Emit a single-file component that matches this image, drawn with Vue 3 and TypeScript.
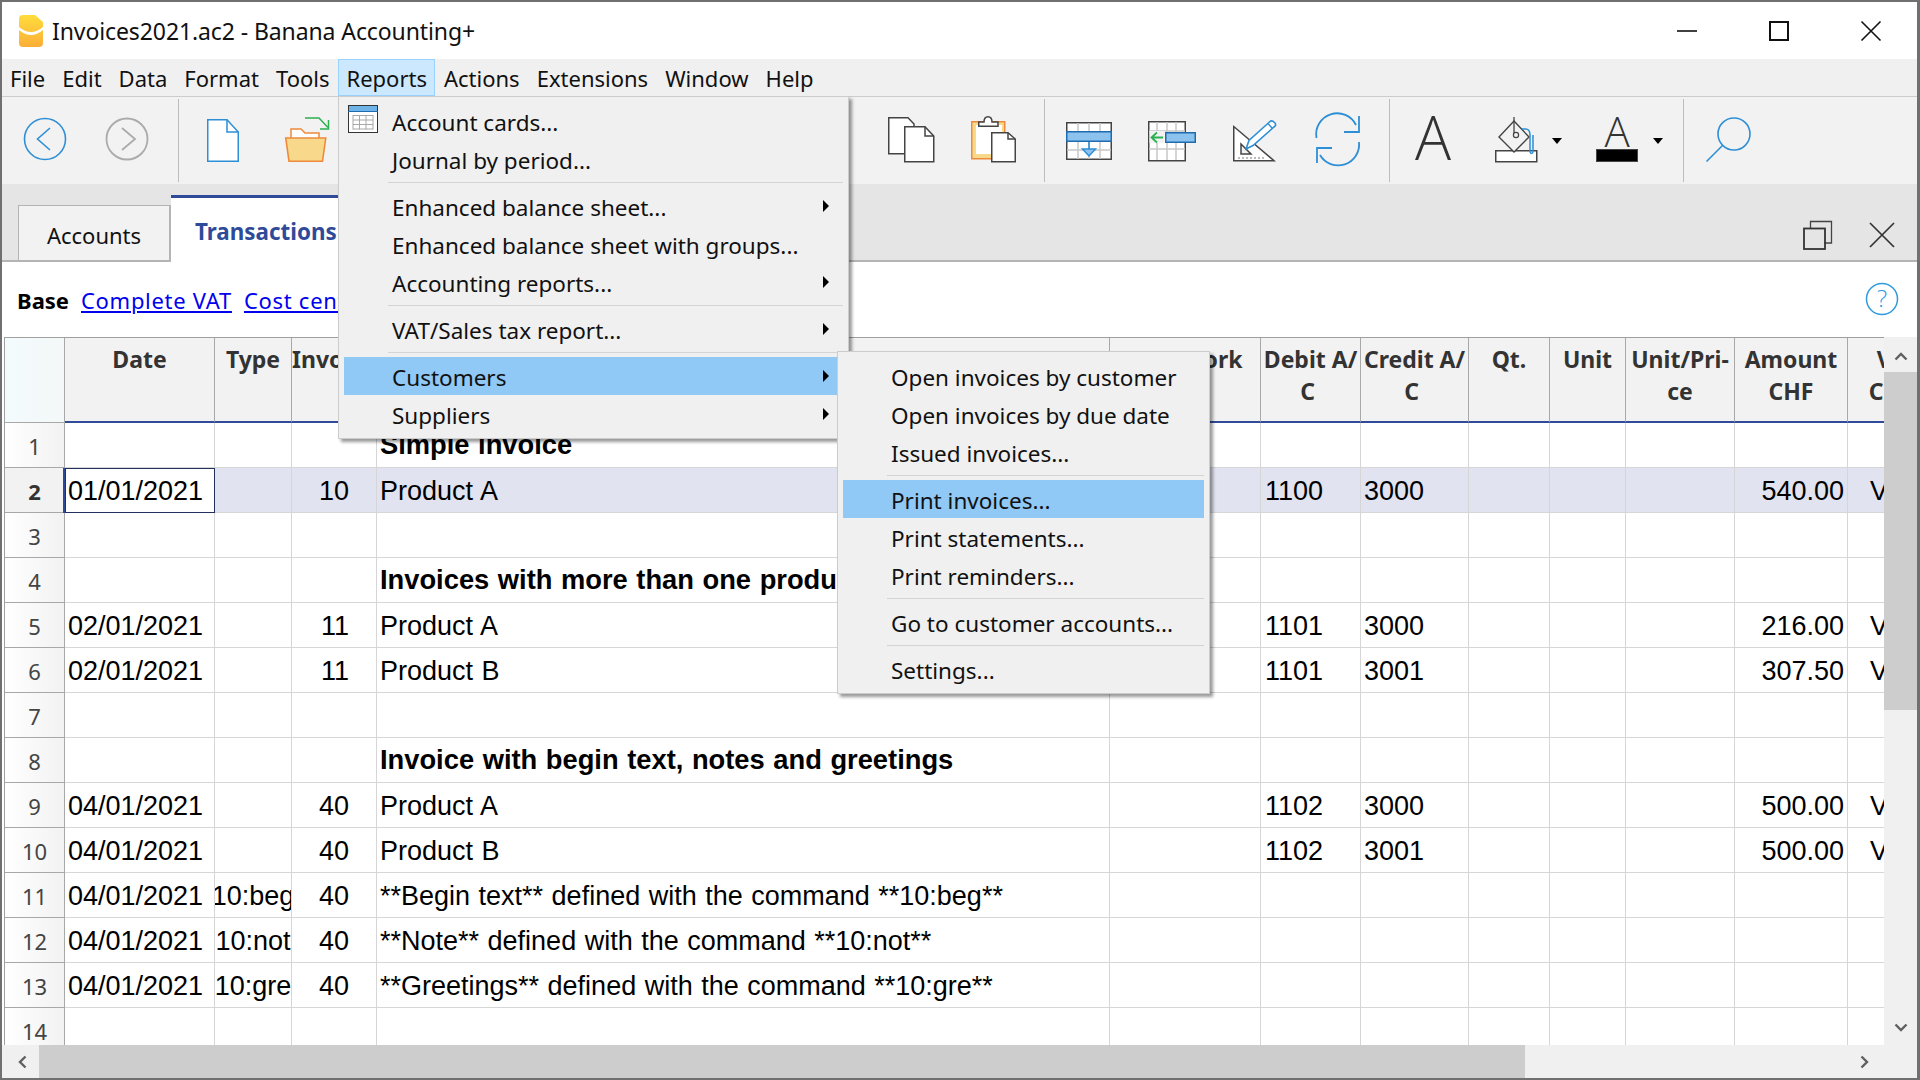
<template>
  <div class="window">
    <header class="titlebar">
      <svg class="logo" width="24" height="32" viewBox="0 0 24 32">
        <defs>
          <linearGradient id="logoFill" x1="0" y1="0" x2="0" y2="1">
            <stop offset="0" stop-color="#ffdc3c" />
            <stop offset="1" stop-color="#fbae38" />
          </linearGradient>
        </defs>
        <path d="M4 0H16L24 7V28a4 4 0 0 1-4 4H4a4 4 0 0 1-4-4V4a4 4 0 0 1 4-4Z" fill="url(#logoFill)" />
        <path d="M0 12Q12 22 24 12V15Q12 25 0 15Z" fill="#fff" />
      </svg>
      <span class="title-text">Invoices2021.ac2 - Banana Accounting+</span>
      <div class="win-controls">
        <svg width="20" height="20" viewBox="0 0 20 20"><path d="M0 10H20" stroke="#111" stroke-width="1.6" /></svg>
        <svg width="20" height="20" viewBox="0 0 20 20"><rect x="1" y="1" width="18" height="18" fill="none" stroke="#111" stroke-width="2" /></svg>
        <svg width="20" height="20" viewBox="0 0 20 20"><path d="M0.5 0.5L19.5 19.5M19.5 0.5L0.5 19.5" stroke="#111" stroke-width="1.6" /></svg>
      </div>
    </header>

    <nav class="menubar">
      <span v-for="m in menus" :key="m" class="menubar-item" :class="{ open: m === 'Reports' }">{{ m }}</span>
    </nav>

    <div class="toolbar">
      <svg class="tb first" width="48" height="48" viewBox="0 0 48 48">
        <circle cx="24" cy="23" r="20.5" fill="none" stroke="#2e8fd6" stroke-width="1.6" />
        <path d="M29 12L16.5 23L29 34" fill="none" stroke="#2e8fd6" stroke-width="1.6" />
      </svg>
      <svg class="tb" width="48" height="48" viewBox="0 0 48 48">
        <circle cx="24" cy="23" r="20.5" fill="none" stroke="#ababab" stroke-width="1.8" />
        <path d="M19 12L32 23L19 34" fill="none" stroke="#ababab" stroke-width="1.8" />
      </svg>
      <i class="tb-sep"></i>
      <svg class="tb after-sep" width="48" height="48" viewBox="0 0 48 48">
        <path d="M8.75 3.75H28L39.25 16V45.25H8.75Z" fill="#fff" stroke="#2e8fd6" stroke-width="1.5" />
        <path d="M28 3.75V16H39.25" fill="none" stroke="#2e8fd6" stroke-width="1.5" />
      </svg>
      <svg class="tb" width="48" height="48" viewBox="0 0 48 48">
        <path d="M10 22V13H20L24 17H38V22" fill="#fff" stroke="#ed8a3c" stroke-width="1.5" />
        <path d="M4.75 22H44.75L41.5 45.25H8Z" fill="#f8d88a" stroke="#ed8a3c" stroke-width="1.6" />
        <path d="M24 2H38L47 11.5" fill="none" stroke="#2cb050" stroke-width="1.5" />
        <path d="M47.5 4V13H39" fill="none" stroke="#2cb050" stroke-width="1.5" />
      </svg>
      <i class="tb-hidden"></i>
      <svg class="tb" width="48" height="48" viewBox="0 0 48 48">
        <path d="M1.75 1.75H21L27 8V37.75H1.75Z" fill="#fff" stroke="#444" stroke-width="1.5" />
        <path d="M17.75 10.75H38L46.75 20V45.75H17.75Z" fill="#fff" stroke="#444" stroke-width="1.5" />
        <path d="M38 10.75V20H46.75" fill="none" stroke="#444" stroke-width="1.5" />
      </svg>
      <svg class="tb" width="48" height="48" viewBox="0 0 48 48">
        <rect x="2.75" y="5.75" width="33" height="37" fill="#f8d88a" stroke="#ed8a3c" stroke-width="1.5" />
        <rect x="7" y="9" width="26" height="29" fill="#fff" />
        <path d="M9.75 6H15Q15 .75 19 .75T23 6H29V10.25H9.75Z" fill="#fff" stroke="#444" stroke-width="1.5" />
        <path d="M22.75 16.75H39L46.25 23V45.75H22.75Z" fill="#fff" stroke="#444" stroke-width="1.5" />
        <path d="M39 16.75V23H46.25" fill="none" stroke="#444" stroke-width="1.5" />
      </svg>
      <i class="tb-sep"></i>
      <svg class="tb after-sep" width="48" height="48" viewBox="0 0 48 48">
        <rect x="1.75" y="6.75" width="44.5" height="36.5" fill="#fff" stroke="#444" stroke-width="1.5" />
        <path d="M13 7V43M24 7V43M35 7V43M2 34H46" stroke="#c8c8c8" stroke-width="1.5" />
        <rect x="1.75" y="15.75" width="44.5" height="9.5" fill="#8cc3ee" stroke="#1e6bb0" stroke-width="1.5" />
        <path d="M24 26V35" stroke="#2e8fd6" stroke-width="1.6" />
        <path d="M17.5 33H30.5L24 40Z" fill="#8cc3ee" stroke="#2e8fd6" stroke-width="1.5" />
      </svg>
      <svg class="tb" width="48" height="48" viewBox="0 0 48 48">
        <rect x="1.75" y="5.75" width="36.5" height="39" fill="#fff" stroke="#444" stroke-width="1.5" />
        <path d="M10 6V44M20 6V44M29 6V44M2 15H38M2 33H38" stroke="#c8c8c8" stroke-width="1.5" />
        <rect x="2.5" y="15" width="15" height="12" fill="#f2f2f2" />
        <rect x="18.75" y="16.75" width="29.5" height="9.5" fill="#8cc3ee" stroke="#1e6bb0" stroke-width="1.5" />
        <path d="M16 21.5H5M10 16.5L4.5 21.5L10 26.5" fill="none" stroke="#2cb050" stroke-width="1.8" />
      </svg>
      <svg class="tb e1" width="48" height="48" viewBox="0 0 48 48">
        <path d="M3.75 10.5V44.75H44Z" fill="#fff" stroke="#444" stroke-width="1.5" />
        <path d="M11 28V38H21Z" fill="#f2f2f2" stroke="#444" stroke-width="1.5" />
        <path d="M9 41V43M13 41V43M17 41V43M21 41V43M25 41V43M29 41V43M33 41V43" stroke="#777" stroke-width="1" />
        <path d="M16 33L19 24.5L40 5.5Q42 4 44.5 6.5T44 11L23 29.5Z" fill="#fff" stroke="#2e8fd6" stroke-width="1.6" />
        <path d="M38 7.5L42.5 12.5" stroke="#2e8fd6" stroke-width="1.4" />
      </svg>
      <svg class="tb e2" width="48" height="48" viewBox="0 0 48 48">
        <g fill="none" stroke="#2e8fd6" stroke-width="1.8">
          <path d="M2.5 22A21 21 0 0 1 42 9" />
          <path d="M45 0V16H30" />
          <path d="M45 26A21 21 0 0 1 6 39" />
          <path d="M3 47V32H18" />
        </g>
      </svg>
      <i class="tb-sep"></i>
      <svg class="tb after-sep" width="48" height="48" viewBox="0 0 48 48">
        <text x="23" y="44" text-anchor="middle" class="font-a big">A</text>
      </svg>
      <svg class="tb" width="48" height="48" viewBox="0 0 48 48">
        <rect x="3.75" y="34.75" width="41" height="11" fill="#fff" stroke="#444" stroke-width="1.5" />
        <path d="M22 5L37 21L22 36L7 21Z" fill="#f2f2f2" stroke="#444" stroke-width="1.4" />
        <path d="M22 1V18" stroke="#444" stroke-width="1.3" />
        <circle cx="24" cy="19" r="2.6" fill="#f2f2f2" stroke="#444" stroke-width="1.2" />
        <path d="M30 13H33.5Q38 13 38 19V36Q39.5 39 41 36V19" fill="none" stroke="#2e8fd6" stroke-width="1.5" />
      </svg>
      <i class="caret"></i>
      <svg class="tb after-caret" width="48" height="48" viewBox="0 0 48 48">
        <text x="24" y="31" text-anchor="middle" class="font-a small">A</text>
        <rect x="3.5" y="33.5" width="41" height="12" fill="#000" stroke="#444" />
      </svg>
      <i class="caret"></i>
      <i class="tb-sep short"></i>
      <svg class="tb after-sep" width="48" height="48" viewBox="0 0 48 48">
        <circle cx="30" cy="18" r="16" fill="none" stroke="#2e8fd6" stroke-width="1.6" />
        <path d="M18.5 29.5L2.5 45.5" stroke="#2e8fd6" stroke-width="1.6" />
      </svg>
    </div>

    <div class="tabbar">
      <div class="tab">Accounts</div>
      <div class="tab active">Transactions</div>
      <div class="tab-tools">
        <svg width="30" height="30" viewBox="0 0 30 30">
          <path d="M7.5 8V1.5H28.5V23H21.5" fill="none" stroke="#444" stroke-width="1.3" />
          <rect x="1" y="8.5" width="21" height="20.5" fill="none" stroke="#333" stroke-width="1.8" />
        </svg>
        <svg width="26" height="26" viewBox="0 0 26 26">
          <path d="M1 1L25 25M25 1L1 25" stroke="#333" stroke-width="1.7" />
        </svg>
      </div>
    </div>

    <div class="linkbar">
      <b>Base</b>
      <a>Complete VAT</a>
      <a>Cost centers</a>
      <svg class="help" width="34" height="34" viewBox="0 0 34 34">
        <circle cx="17" cy="17" r="15.5" fill="none" stroke="#2e9bdc" stroke-width="1.5" />
        <text x="17" y="25" text-anchor="middle" class="help-q">?</text>
      </svg>
    </div>

    <div class="table-area">
      <div class="grid">
        <div class="cols head-row">
          <div class="corner"></div>
          <div v-for="h in headers" :key="h.label" class="hcell" :class="h.cls">{{ h.label }}</div>
        </div>
        <div v-for="r in rows" :key="r.n" class="cols row" :class="{ current: r.n === 2 }">
          <div class="rownum">{{ r.n }}</div>
          <div class="cell" :class="{ selected: r.n === 2 }">{{ r.date }}</div>
          <div class="cell center"><span>{{ r.type }}</span></div>
          <div class="cell right wide-pad">{{ r.inv }}</div>
          <div class="cell" :class="{ strong: r.bold }">{{ r.desc }}</div>
          <div class="cell"></div>
          <div class="cell debit">{{ r.debit }}</div>
          <div class="cell">{{ r.credit }}</div>
          <div class="cell"></div>
          <div class="cell"></div>
          <div class="cell"></div>
          <div class="cell right">{{ r.amount }}</div>
          <div class="cell vat">{{ r.amount ? 'V81' : '' }}</div>
        </div>
      </div>
      <div class="vscroll">
        <svg class="chev" width="14" height="9" viewBox="0 0 14 9"><path d="M1.5 7.5L7 2L12.5 7.5" fill="none" stroke="#606060" stroke-width="2.4" /></svg>
        <div class="vthumb"></div>
        <svg class="chev down" width="14" height="9" viewBox="0 0 14 9"><path d="M1.5 1.5L7 7L12.5 1.5" fill="none" stroke="#606060" stroke-width="2.4" /></svg>
      </div>
    </div>

    <div class="hscroll">
      <svg class="hleft" width="9" height="14" viewBox="0 0 9 14"><path d="M7.5 1.5L2 7L7.5 12.5" fill="none" stroke="#606060" stroke-width="2.4" /></svg>
      <div class="hthumb"></div>
      <svg class="hright" width="9" height="14" viewBox="0 0 9 14"><path d="M1.5 1.5L7 7L1.5 12.5" fill="none" stroke="#606060" stroke-width="2.4" /></svg>
    </div>

    <div class="menu reports-menu">
      <template v-for="(it, i) in reportItems" :key="i">
        <div v-if="it.sep" class="menu-sep"></div>
        <div v-else class="menu-item" :class="{ hot: it.hot }">
          <svg v-if="i === 0" class="menu-icon" width="30" height="28" viewBox="0 0 30 28">
            <rect x="0.5" y="0.5" width="29" height="27" fill="#fff" stroke="#333" />
            <rect x="1" y="1" width="28" height="5" fill="#6db3e8" />
            <path d="M0 6.5H30" stroke="#1e6bb0" />
            <path d="M5 10.5H25M5 15H25M5 19.5H25M5 24H25M5 10V24.5M11.5 10V24.5M18 10V24.5M25 10V24.5" stroke="#a8a8a8" />
          </svg>
          <span>{{ it.label }}</span>
          <i v-if="it.sub" class="menu-arrow"></i>
        </div>
      </template>
    </div>

    <div class="menu customers-menu">
      <template v-for="(it, i) in customerItems" :key="i">
        <div v-if="it.sep" class="menu-sep"></div>
        <div v-else class="menu-item" :class="{ hot: it.hot }">
          <span>{{ it.label }}</span>
        </div>
      </template>
    </div>
  </div>
</template>

<script setup lang="ts">
interface MenuEntry {
  label?: string
  sep?: boolean
  sub?: boolean
  hot?: boolean
}

interface Row {
  n: number
  date?: string
  type?: string
  inv?: string
  desc?: string
  bold?: boolean
  debit?: string
  credit?: string
  amount?: string
}

const menus = ['File', 'Edit', 'Data', 'Format', 'Tools', 'Reports', 'Actions', 'Extensions', 'Window', 'Help']

const reportItems: MenuEntry[] = [
  { label: 'Account cards...' },
  { label: 'Journal by period...' },
  { sep: true },
  { label: 'Enhanced balance sheet...', sub: true },
  { label: 'Enhanced balance sheet with groups...' },
  { label: 'Accounting reports...', sub: true },
  { sep: true },
  { label: 'VAT/Sales tax report...', sub: true },
  { sep: true },
  { label: 'Customers', sub: true, hot: true },
  { label: 'Suppliers', sub: true }
]

const customerItems: MenuEntry[] = [
  { label: 'Open invoices by customer' },
  { label: 'Open invoices by due date' },
  { label: 'Issued invoices...' },
  { sep: true },
  { label: 'Print invoices...', hot: true },
  { label: 'Print statements...' },
  { label: 'Print reminders...' },
  { sep: true },
  { label: 'Go to customer accounts...' },
  { sep: true },
  { label: 'Settings...' }
]

const headers = [
  { label: 'Date' },
  { label: 'Type' },
  { label: 'Invoice', cls: 'left' },
  { label: 'Description' },
  { label: 'Network', cls: 'shift' },
  { label: 'Debit A/\nC\u00a0' },
  { label: 'Credit A/\nC\u00a0' },
  { label: 'Qt.' },
  { label: 'Unit' },
  { label: 'Unit/Pri-\nce' },
  { label: 'Amount\nCHF' },
  { label: 'VAT\nCode' }
]

const rows: Row[] = [
  { n: 1, desc: 'Simple invoice', bold: true },
  { n: 2, date: '01/01/2021', inv: '10', desc: 'Product A', debit: '1100', credit: '3000', amount: '540.00' },
  { n: 3 },
  { n: 4, desc: 'Invoices with more than one product', bold: true },
  { n: 5, date: '02/01/2021', inv: '11', desc: 'Product A', debit: '1101', credit: '3000', amount: '216.00' },
  { n: 6, date: '02/01/2021', inv: '11', desc: 'Product B', debit: '1101', credit: '3001', amount: '307.50' },
  { n: 7 },
  { n: 8, desc: 'Invoice with begin text, notes and greetings', bold: true },
  { n: 9, date: '04/01/2021', inv: '40', desc: 'Product A', debit: '1102', credit: '3000', amount: '500.00' },
  { n: 10, date: '04/01/2021', inv: '40', desc: 'Product B', debit: '1102', credit: '3001', amount: '500.00' },
  { n: 11, date: '04/01/2021', type: '10:beg', inv: '40', desc: '**Begin text** defined with the command **10:beg**' },
  { n: 12, date: '04/01/2021', type: '10:not', inv: '40', desc: '**Note** defined with the command **10:not**' },
  { n: 13, date: '04/01/2021', type: '10:gre', inv: '40', desc: '**Greetings** defined with the command **10:gre**' },
  { n: 14 }
]
</script>

<style>
html,
body {
  margin: 0;
  overflow: hidden;
}
</style>

<style scoped>
.window {
  position: relative;
  box-sizing: border-box;
  width: 1920px;
  height: 1080px;
  display: flex;
  flex-direction: column;
  background: #fff;
  border: 2px solid #707070;
  border-right-width: 3px;
  font-family: "Noto Sans", "Open Sans", sans-serif;
  font-size: 22px;
  color: #111;
  overflow: hidden;
}

svg {
  display: block;
  flex: none;
  overflow: visible;
}

/* title bar */
.titlebar {
  height: 57px;
  display: flex;
  align-items: center;
  padding-left: 17px;
  flex: none;
}

.title-text {
  margin-left: 9px;
  font-size: 23px;
  letter-spacing: -0.1px;
}

.win-controls {
  margin-left: auto;
  margin-right: 36px;
  display: flex;
  gap: 72px;
}

/* menu bar */
.menubar {
  height: 37px;
  flex: none;
  display: flex;
  background: #f0f0f0;
  border-bottom: 1px solid #ccc;
}

.menubar-item {
  box-sizing: border-box;
  padding: 0 7px;
  margin-right: 1px;
  display: flex;
  align-items: center;
  border: 1px solid transparent;
}

.menubar-item.open {
  background: #cce8ff;
  border-color: #99d1ff;
}

/* toolbar */
.toolbar {
  height: 87px;
  flex: none;
  display: flex;
  align-items: center;
  background: #f2f2f2;
}

.tb {
  margin-left: 34px;
  margin-bottom: 2px;
}

.tb.first {
  margin-left: 19px;
}

.tb.after-sep {
  margin-left: 20px;
}

.tb.after-caret {
  margin-left: 31px;
}

.tb.e1 {
  margin-left: 35px;
}

.tb.e2 {
  margin-left: 36px;
}

.tb-sep {
  width: 1px;
  height: 83px;
  background: #bdbdbd;
  margin-left: 27px;
  flex: none;
}

.tb-sep.short {
  margin-left: 20px;
}

.tb-hidden {
  width: 524px;
  flex: none;
}

.caret {
  width: 0;
  height: 0;
  margin-left: 12px;
  border-left: 5px solid transparent;
  border-right: 5px solid transparent;
  border-top: 6px solid #000;
  flex: none;
}

.font-a {
  font-family: "Open Sans", sans-serif;
  font-weight: 300;
  fill: #333;
}

.font-a.big {
  font-size: 60px;
}

.font-a.small {
  font-size: 42px;
}

/* tabs */
.tabbar {
  height: 78px;
  flex: none;
  display: flex;
  align-items: flex-end;
  background: #e5e5e5;
  border-bottom: 2px solid #b4b4b4;
  box-sizing: border-box;
  padding-left: 16px;
}

.tab {
  box-sizing: border-box;
  width: 153px;
  height: 55px;
  display: flex;
  align-items: center;
  justify-content: center;
  background: #f2f2f2;
  border: 1px solid #b4b4b4;
  border-right-width: 2px;
  border-bottom: none;
  padding-top: 3px;
}

.tab.active {
  width: 240px;
  height: 67px;
  margin-bottom: -2px;
  justify-content: flex-start;
  padding: 2px 0 0 24px;
  background: #fff;
  border: none;
  border-top: 3px solid #2f4a99;
  color: #2f4a99;
  font-size: 22.4px;
  font-weight: 700;
}

.tab-tools {
  margin-left: auto;
  margin-right: 22px;
  margin-bottom: 10px;
  display: flex;
  align-items: center;
  gap: 36px;
}

/* link row */
.linkbar {
  height: 75px;
  flex: none;
  box-sizing: border-box;
  display: flex;
  align-items: center;
  padding: 1px 18px 0 15px;
  gap: 12px;
  color: #000;
}

.linkbar b {
  color: #000;
}

.linkbar a {
  color: #0000ee;
  text-decoration: underline;
  letter-spacing: 0.7px;
}

.help {
  margin-left: auto;
  margin-bottom: 3px;
}

.help-q {
  font-family: "Open Sans", sans-serif;
  font-weight: 300;
  font-size: 24px;
  fill: #2e9bdc;
}

/* table */
.table-area {
  flex: 1;
  min-height: 0;
  display: flex;
  padding-left: 2px;
}

.grid {
  width: 1879px;
  overflow: hidden;
  border-left: 1px solid #a0a0a0;
  border-top: 1px solid #a0a0a0;
}

.cols {
  display: grid;
  grid-template-columns: 60px 150px 77px 85px 733px 151px 100px 108px 81px 76px 109px 113px 100px;
  width: 1943px;
}

.head-row {
  height: 85px;
}

.corner {
  background: linear-gradient(to right, #f3fbfd, #f4f8f8);
  border-right: 1px solid #a8a8a8;
  border-bottom: 1px solid #a8a8a8;
}

.hcell {
  box-sizing: border-box;
  background: #f2f2f2;
  border-right: 1px solid #a8a8a8;
  border-bottom: 2px solid #2f4a99;
  padding-top: 5px;
  text-align: center;
  font-size: 23px;
  line-height: 32px;
  font-weight: 700;
  color: #333;
  white-space: pre-wrap;
  overflow: hidden;
}

.hcell.left {
  text-align: left;
  white-space: nowrap;
}

.hcell.shift {
  padding-left: 14px;
}

.row {
  height: 45px;
}

.rownum {
  box-sizing: border-box;
  display: flex;
  align-items: center;
  justify-content: center;
  padding-top: 1px;
  background: linear-gradient(to right, #fff, #f2f2f2);
  border-right: 1px solid #a8a8a8;
  border-bottom: 1px solid #a8a8a8;
  color: #444;
}

.current .rownum {
  background: #f2f2f2;
  font-weight: 700;
  color: #333;
}

.cell {
  box-sizing: border-box;
  display: flex;
  align-items: center;
  padding: 2px 3px 0;
  border-right: 1px solid #d6d6d6;
  border-bottom: 1px solid #d6d6d6;
  font-family: "Liberation Sans", Arial, sans-serif;
  font-size: 27px;
  word-spacing: 1px;
  color: #000;
  white-space: nowrap;
  overflow: hidden;
}

.current .cell {
  background: #e1e3f0;
}

.current .cell.selected {
  background: #fff;
  outline: 1px solid #23305e;
  outline-offset: -1px;
  box-shadow: -2px 0 0 #2f4a99;
}

.cell.center {
  justify-content: center;
  padding: 2px 0 0;
}

.cell.center span {
  flex: none;
}

.cell.right {
  justify-content: flex-end;
}

.cell.wide-pad {
  padding-right: 27px;
}

.cell.strong {
  font-size: 27.3px;
  font-weight: 700;
  padding-top: 0;
}

.cell.debit {
  padding-left: 4px;
}

.cell.vat {
  padding-left: 22px;
  border-right: none;
}

/* scrollbars */
.vscroll {
  position: relative;
  width: 33px;
  flex: none;
  background: #f0f0f0;
  display: flex;
  flex-direction: column;
  align-items: center;
}

.chev {
  margin-top: 15px;
}

.vthumb {
  width: 33px;
  height: 338px;
  margin-top: 11px;
  background: #cdcdcd;
}

.chev.down {
  margin-top: auto;
  margin-bottom: 13px;
}

.hscroll {
  height: 33px;
  flex: none;
  display: flex;
  align-items: center;
  background: #f0f0f0;
}

.hleft {
  margin-left: 16px;
}

.hthumb {
  width: 1486px;
  height: 33px;
  margin-left: 12px;
  background: #cdcdcd;
}

.hright {
  margin-left: 335px;
}

/* dropdown menus */
.menu {
  position: absolute;
  box-sizing: border-box;
  padding: 5px;
  background: #f0f0f0;
  border: 1px solid #ccc;
  box-shadow: 3px 3px 3px rgba(0, 0, 0, 0.4);
  font-size: 22.5px;
}

.reports-menu {
  left: 336px;
  top: 94px;
  width: 511px;
  z-index: 2;
}

.customers-menu {
  left: 835px;
  top: 349px;
  width: 373px;
  z-index: 3;
}

.menu-item {
  position: relative;
  height: 38px;
  display: flex;
  align-items: center;
  padding-left: 48px;
}

.menu-item span {
  padding-top: 2px;
}

.menu-item.hot {
  background: #90c8f6;
}

.menu-sep {
  height: 1px;
  margin: 4px 0 4px 44px;
  background: #d4d4d4;
}

.menu-icon {
  position: absolute;
  left: 4px;
  top: 3px;
}

.menu-arrow {
  position: absolute;
  right: 14px;
  top: 13px;
  width: 0;
  height: 0;
  border-top: 6px solid transparent;
  border-bottom: 6px solid transparent;
  border-left: 6px solid #000;
}
</style>
